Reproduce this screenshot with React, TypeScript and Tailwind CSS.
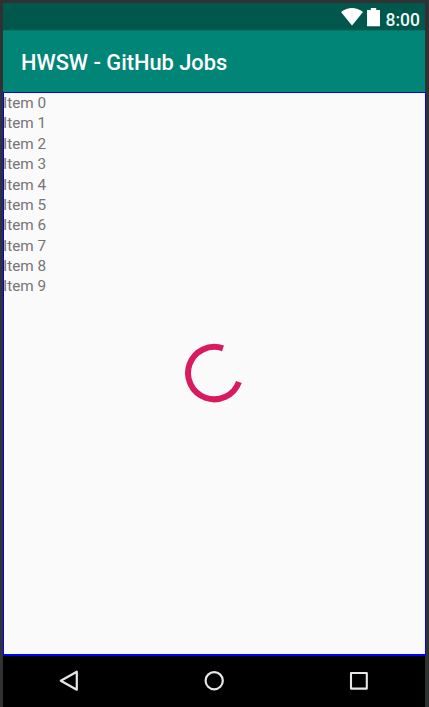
const items = Array.from({ length: 10 }, (_, i) => `Item ${i}`);

function StatusBar() {
  return (
    <header className="flex h-[27px] shrink-0 items-start justify-end bg-[#00574b] pr-[5px]">
      <svg className="mt-[5px] h-[18px] w-[22px]" viewBox="0 0 22 18" fill="#fff">
        <path d="M0 4Q11-4 22 4L11 17.5Z" />
      </svg>
      <svg className="mt-[5px] ml-[4px] h-[19px] w-[13px]" viewBox="0 0 13 19" fill="#fff">
        <path d="M3.800 0h5.400v2H13v16.200H0V2h3.800Z" />
      </svg>
      <span className="mt-[7px] ml-[6px] text-[17.500px] leading-[21px] font-medium text-[#eefafa]">8:00</span>
    </header>
  );
}

function Spinner() {
  return (
    <svg className="h-[60px] w-[60px]" viewBox="0 0 60 60" fill="none">
      <path d="M38.960 5.380A26.200 26.200 0 1 0 54.900 38.960" stroke="#d81b60" strokeWidth="6" />
    </svg>
  );
}

function NavigationBar() {
  return (
    <nav className="flex h-[51px] shrink-0 items-center justify-between bg-black pr-[54px] pb-[2px] pl-[55px]">
      <svg className="h-[24px] w-[24px]" viewBox="0 0 24 24" fill="none" stroke="#e6e6e6" strokeWidth="2.200" strokeLinejoin="round">
        <path d="M2.800 11.700L18.800 2.700V20.700Z" />
      </svg>
      <svg className="h-[24px] w-[24px]" viewBox="0 0 24 24" fill="none" stroke="#e6e6e6" strokeWidth="2.200">
        <circle cx="11.200" cy="11.700" r="8.600" />
      </svg>
      <svg className="h-[24px] w-[24px]" viewBox="0 0 24 24" fill="none" stroke="#e6e6e6" strokeWidth="2.100" strokeLinejoin="round">
        <rect x="4" y="4" width="15.800" height="15.600" />
      </svg>
    </nav>
  );
}

export default function App() {
  return (
    <div className="h-[707px] w-[429px] overflow-hidden bg-[#303133] pt-[3px] pl-[3px] font-['Roboto',sans-serif]">
      <div className="flex h-[704px] w-[423px] flex-col">
        <div className="w-[422px]">
          <StatusBar />
          <div className="flex h-[62px] items-center border-t border-[#007568] bg-[#008577] pt-[3px] pl-[18px]">
            <h1 className="text-[21.800px] leading-[28px] font-medium whitespace-nowrap text-white">HWSW - GitHub Jobs</h1>
          </div>
        </div>
        <main className="grid h-[564px] shrink-0 border border-b-2 border-[#0000ff] bg-[#fafafa]">
          <ul className="col-start-1 row-start-1 -ml-px text-[15.300px] leading-[20.370px] text-[#757575]">
            {items.map((item) => (
              <li key={item}>{item}</li>
            ))}
          </ul>
          <div className="col-start-1 row-start-1 flex items-center justify-center pr-[2px] pb-[2px]">
            <Spinner />
          </div>
        </main>
        <div className="w-[422px]">
          <NavigationBar />
        </div>
      </div>
    </div>
  );
}
